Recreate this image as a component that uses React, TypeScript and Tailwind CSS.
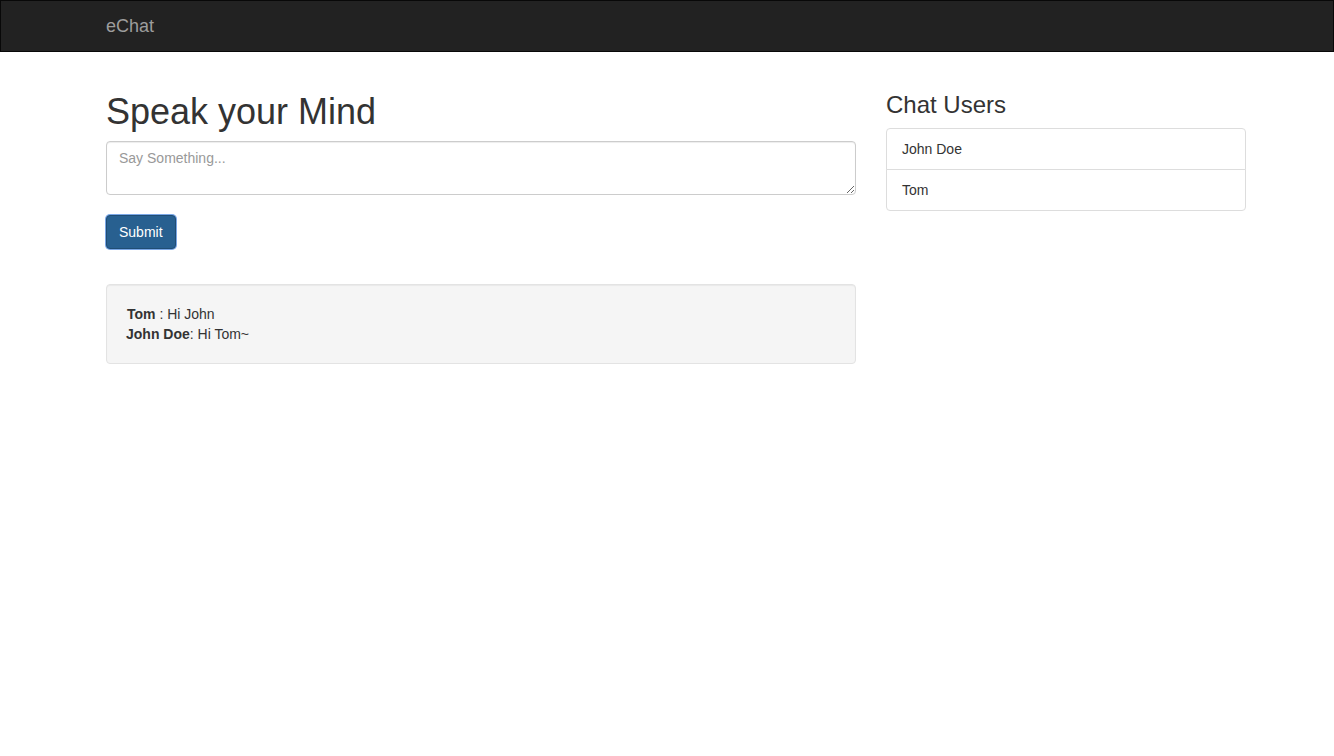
export default function App() {
  const users = ["John Doe", "Tom"];
  const messages = [
    { name: "Tom", sep: " : ", text: "Hi John" },
    { name: "John Doe", sep: ": ", text: "Hi Tom~" },
  ];

  return (
    <div className="min-h-screen bg-white text-[14px] leading-[20px] text-[#333] font-['Liberation_Sans',Arial,sans-serif]">
      {/* navbar */}
      <nav className="h-[52px] bg-[#222] border border-[#080808]">
        <div className="ml-[90px] w-[1170px] px-[15px]">
          <a className="block h-[50px] py-[15px] text-[18px] leading-[20px] text-[#9d9d9d]">eChat</a>
        </div>
      </nav>

      <div className="ml-[91px] w-[1170px] px-[15px] mt-[20px]">
        <div className="flex gap-[30px]">
          {/* left column */}
          <div className="w-[750px]">
            <h1 className="mt-[20px] mb-[9px] text-[36px] leading-[39.6px] font-normal">Speak your Mind</h1>
            <textarea
              rows={2}
              placeholder="Say Something..."
              className="block w-full h-[54px] px-[12px] py-[6px] text-[14px] leading-[20px] text-[#555] border border-[#ccc] rounded-[4px] shadow-[inset_0_1px_1px_rgba(0,0,0,0.075)] placeholder:text-[#999] outline-none"
            />
            <button
              type="button"
              className="mt-[20px] h-[34px] px-[12px] text-[14px] leading-[20px] text-white bg-[#286090] border border-[#204d74] rounded-[4px] ring-1 ring-[#7aa7e6]"
            >
              Submit
            </button>
            <div className="mt-[35px] min-h-[20px] p-[19px] bg-[#f5f5f5] border border-[#e3e3e3] rounded-[4px] shadow-[inset_0_1px_1px_rgba(0,0,0,0.05)]">
              {messages.map((m, i) => (
                <div key={i} className={i === 0 ? "ml-px" : ""}>
                  <b className="font-bold">{m.name}</b>
                  {m.sep}
                  {m.text}
                </div>
              ))}
            </div>
          </div>

          {/* right column */}
          <div className="w-[360px]">
            <h3 className="mt-[20px] mb-[10px] text-[24px] leading-[26.4px] font-normal">Chat Users</h3>
            <ul>
              {users.map((u, i) => (
                <li
                  key={u}
                  className={
                    "px-[15px] py-[10px] bg-white border border-[#ddd] " +
                    (i === 0 ? "rounded-t-[4px] -mb-px" : "rounded-b-[4px]")
                  }
                >
                  {u}
                </li>
              ))}
            </ul>
          </div>
        </div>
      </div>
    </div>
  );
}
